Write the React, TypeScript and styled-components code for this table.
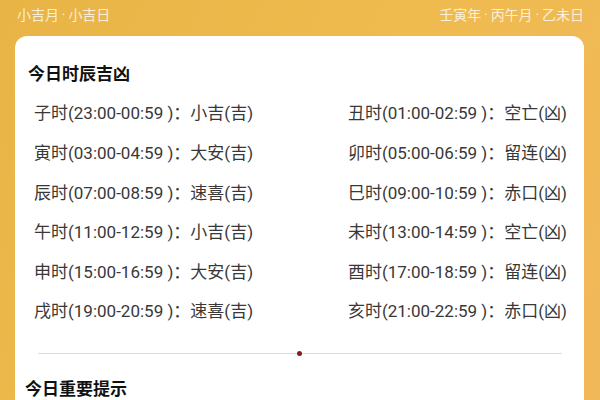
import React from "react";
import styled, { createGlobalStyle } from "styled-components";

const Global = createGlobalStyle`
  html, body { margin: 0; padding: 0; }
  body {
    width: 600px;
    height: 400px;
    overflow: hidden;
    font-family: Roboto, "Noto Sans CJK SC", sans-serif;
  }
`;

const Page = styled.div`
  width: 600px;
  height: 400px;
  overflow: hidden;
  background: linear-gradient(120deg, #e8b446 0%, #efbb4e 50%, #f1b85a 100%);
  display: flex;
  flex-direction: column;
`;

const Header = styled.div`
  height: 37px;
  display: flex;
  justify-content: space-between;
  align-items: flex-start;
  padding: 5px 16px 0 17px;
  box-sizing: border-box;
  color: rgba(255, 255, 255, 0.78);
  font-size: 14px;
  line-height: 20px;
`;

const Card = styled.div`
  margin: 0 16px 0 15px;
  background: #ffffff;
  border-radius: 12px 12px 0 0;
  flex: 1;
  padding: 25px 17px 0 13px;
  box-sizing: border-box;
`;

const Title = styled.div`
  font-family: "Noto Sans CJK SC", sans-serif;
  font-size: 17px;
  font-weight: 700;
  color: #111;
  line-height: 24px;
`;

const Grid = styled.div`
  display: grid;
  grid-template-columns: auto auto;
  justify-content: space-between;
  padding: 9px 0 0 6px;
`;

const Cell = styled.div`
  font-size: 17px;
  color: #383838;
  line-height: 39.6px;
  white-space: pre;
`;

const Divider = styled.div`
  position: relative;
  margin: 21px 5px 0 10px;
  height: 1px;
  background: #e6d6d6;
`;

const Dot = styled.span`
  position: absolute;
  left: 50%;
  top: -2px;
  width: 5px;
  height: 5px;
  margin-left: -3px;
  border-radius: 50%;
  background: #8a1c24;
`;

const SubTitle = styled(Title)`
  margin-top: 22px;
  margin-left: -3px;
`;

const rows: [string, string][] = [
  ["子时(23:00-00:59 )：小吉(吉)", "丑时(01:00-02:59 )：空亡(凶)"],
  ["寅时(03:00-04:59 )：大安(吉)", "卯时(05:00-06:59 )：留连(凶)"],
  ["辰时(07:00-08:59 )：速喜(吉)", "巳时(09:00-10:59 )：赤口(凶)"],
  ["午时(11:00-12:59 )：小吉(吉)", "未时(13:00-14:59 )：空亡(凶)"],
  ["申时(15:00-16:59 )：大安(吉)", "酉时(17:00-18:59 )：留连(凶)"],
  ["戌时(19:00-20:59 )：速喜(吉)", "亥时(21:00-22:59 )：赤口(凶)"],
];

export default function App() {
  return (
    <>
      <Global />
      <Page>
        <Header>
          <span>小吉月{"\u2009·\u2009"}小吉日</span>
          <span>
            壬寅年{"\u2009·\u2009"}丙午月{"\u2009·\u2009"}乙未日
          </span>
        </Header>
        <Card>
          <Title>今日时辰吉凶</Title>
          <Grid>
            {rows.map(([a, b]) => (
              <React.Fragment key={a}>
                <Cell>{a}</Cell>
                <Cell>{b}</Cell>
              </React.Fragment>
            ))}
          </Grid>
          <Divider>
            <Dot />
          </Divider>
          <SubTitle>今日重要提示</SubTitle>
        </Card>
      </Page>
    </>
  );
}
